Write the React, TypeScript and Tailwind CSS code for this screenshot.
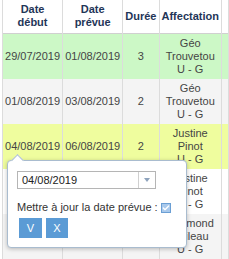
import { Check } from 'lucide-react';

type Row = { debut: string; prevue: string; duree: string; who: string[]; bg: string };

const rows: Row[] = [
  { debut: '29/07/2019', prevue: '01/08/2019', duree: '3', who: ['Géo', 'Trouvetou', 'U - G'], bg: 'bg-[#ccf8c6]' },
  { debut: '01/08/2019', prevue: '03/08/2019', duree: '2', who: ['Géo', 'Trouvetou', 'U - G'], bg: 'bg-[#f4f4f4]' },
  { debut: '04/08/2019', prevue: '06/08/2019', duree: '2', who: ['Justine', 'Pinot', 'U - G'], bg: 'bg-[#effd9e]' },
  { debut: '', prevue: '', duree: '', who: ['Justine', 'Pinot', 'U - G'], bg: 'bg-white' },
  { debut: '', prevue: '', duree: '', who: ['Raymond', 'Boileau', 'U - G'], bg: 'bg-[#f4f4f4]' },
  { debut: '', prevue: '', duree: '', who: ['Géo', 'Trouvetou', 'U - G'], bg: 'bg-white' },
];

const cell = 'border-x border-[#dcdcdc] px-[2px] py-[3px] text-center align-middle';

export default function App() {
  return (
    <div className="relative h-[259px] w-[229px] overflow-hidden bg-white font-['Liberation_Sans',Arial,sans-serif] text-[11px] leading-[13px] text-[#454545]">
      <table className="ml-[2px] table-fixed border-collapse">
        <colgroup>
          <col className="w-[61px]" />
          <col className="w-[63px]" />
          <col className="w-[38px]" />
          <col className="w-[62px]" />
          <col className="w-[60px]" />
        </colgroup>
        <thead>
          <tr className="h-[33px] border-b border-[#d0d0d0] font-bold text-[#1f3658]">
            <th className={cell}>Date<br />début</th>
            <th className={cell}>Date<br />prévue</th>
            <th className={cell}>Durée</th>
            <th className={cell}>Affectation</th>
            <th className={cell}></th>
          </tr>
        </thead>
        <tbody>
          {rows.map((r, i) => (
            <tr key={i} className={`h-[45px] ${r.bg}`}>
              <td className={cell}>{r.debut}</td>
              <td className={cell}>{r.prevue}</td>
              <td className={cell}>{r.duree}</td>
              <td className={cell}>
                {r.who.map((w) => (
                  <div key={w}>{w}</div>
                ))}
              </td>
              <td className={cell}></td>
            </tr>
          ))}
        </tbody>
      </table>

      {/* date popover */}
      <div className="absolute left-[7px] top-[160px] h-[88px] w-[180px] rounded-[4px] border border-[#a9bccf] bg-white shadow-[0_1px_4px_rgba(0,0,0,0.25)]">
        <div className="absolute -top-[5px] left-[5px] h-[9px] w-[9px] rotate-45 border-l border-t border-[#a9bccf] bg-white" />
        <div className="ml-[9px] mt-[10px] flex h-[18px] w-[139px] border border-[#b5b5b5] bg-white">
          <div className="flex-1 pl-[4px] text-[11px] leading-[16px] text-[#222]">04/08/2019</div>
          <div className="flex w-[17px] items-center justify-center border-l border-[#d0d0d0]">
            <div className="h-0 w-0 border-x-[3px] border-t-[4px] border-x-transparent border-t-[#8ea3bd]" />
          </div>
        </div>
        <div className="ml-[9px] mt-[12px] flex items-center text-[11px] leading-[13px] text-[#333]">
          <span>Mettre à jour la date prévue :</span>
          <span className="ml-[3px] flex h-[10px] w-[10px] items-center justify-center border border-[#6b9fd4] bg-[#a9c9ec]">
            <Check className="h-[8px] w-[8px] text-white" strokeWidth={4} />
          </span>
        </div>
        <div className="ml-[11px] mt-[4px] flex gap-[4px]">
          <button type="button" className="h-[20px] w-[23px] bg-[#5b9bd5] text-[11px] text-white">V</button>
          <button type="button" className="h-[20px] w-[22px] bg-[#5b9bd5] text-[11px] text-white">X</button>
        </div>
      </div>
    </div>
  );
}
